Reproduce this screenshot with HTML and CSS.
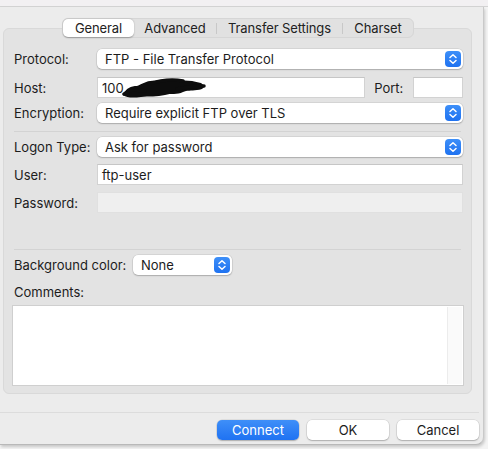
FILE: index.html
```html
<!DOCTYPE html>
<html>
<head>
<meta charset="utf-8">
<link rel="stylesheet" href="styles.css">
</head>
<body>
<div class="topstrip"></div>
<div class="screen">
  <div class="window">
    <div class="tabs">
      <div class="tab sel">General</div>
      <div class="tab">Advanced</div>
      <div class="tsep"></div>
      <div class="tab">Transfer Settings</div>
      <div class="tsep"></div>
      <div class="tab">Charset</div>
    </div>
    <div class="box">
      <div class="row r-protocol">
        <div class="label">Protocol:</div>
        <div class="popup wide"><span>FTP - File Transfer Protocol</span><span class="arrows"><svg width="16" height="16" viewBox="0 0 16 16"><path d="M5 6.5 L8 3.8 L11 6.5 M5 9.5 L8 12.2 L11 9.5" fill="none" stroke="#fff" stroke-width="1.5" stroke-linecap="round" stroke-linejoin="round"/></svg></span></div>
      </div>
      <div class="row tall r-host">
        <div class="label">Host:</div>
        <div class="field host"><span>100</span><svg class="scribble" width="86" height="20" viewBox="0 0 86 20"><path d="M2 17 C5 10 10 8 16 8 C22 6 26 2 34 3 C42 1 48 2 56 3 C62 2 70 2 80 5 C85 8 83 12 76 12 C70 13 66 12 62 14 C56 17 50 15 44 17 C36 19 28 18 20 19 C12 20 6 20 2 17 Z" fill="#0d0d0d"/><path d="M3 16 C10 10 16 12 24 13 M28 6 C40 2 52 1 62 3 M56 11 C66 9 74 8 83 8" fill="none" stroke="#0d0d0d" stroke-width="3.5" stroke-linecap="round"/></svg></div>
        <div class="label port">Port:</div>
        <div class="field portfield"></div>
      </div>
      <div class="row r-enc">
        <div class="label">Encryption:</div>
        <div class="popup wide"><span>Require explicit FTP over TLS</span><span class="arrows"><svg width="16" height="16" viewBox="0 0 16 16"><path d="M5 6.5 L8 3.8 L11 6.5 M5 9.5 L8 12.2 L11 9.5" fill="none" stroke="#fff" stroke-width="1.5" stroke-linecap="round" stroke-linejoin="round"/></svg></span></div>
      </div>
      <div class="sep s1"></div>
      <div class="row r-logon">
        <div class="label">Logon Type:</div>
        <div class="popup wide"><span>Ask for password</span><span class="arrows"><svg width="16" height="16" viewBox="0 0 16 16"><path d="M5 6.5 L8 3.8 L11 6.5 M5 9.5 L8 12.2 L11 9.5" fill="none" stroke="#fff" stroke-width="1.5" stroke-linecap="round" stroke-linejoin="round"/></svg></span></div>
      </div>
      <div class="row tall r-user">
        <div class="label">User:</div>
        <div class="field wide"><span>ftp-user</span></div>
      </div>
      <div class="row tall r-pass">
        <div class="label">Password:</div>
        <div class="field wide disabled"></div>
      </div>
      <div class="sep s2"></div>
      <div class="row r-bg">
        <div class="label bglabel">Background color:</div>
        <div class="popup small"><span>None</span><span class="arrows"><svg width="16" height="16" viewBox="0 0 16 16"><path d="M5 6.5 L8 3.8 L11 6.5 M5 9.5 L8 12.2 L11 9.5" fill="none" stroke="#fff" stroke-width="1.5" stroke-linecap="round" stroke-linejoin="round"/></svg></span></div>
      </div>
      <div class="label comments">Comments:</div>
      <div class="textarea"><div class="track"></div></div>
    </div>
    <div class="bottomsep"></div>
    <div class="buttons">
      <div class="btn primary">Connect</div>
      <div class="btn">OK</div>
      <div class="btn">Cancel</div>
    </div>
  </div>
  <div class="edge"></div>
</div>
</body>
</html>
```
FILE: styles.css
```css
* { box-sizing: border-box; }
html, body { margin: 0; padding: 0; }
body {
  width: 488px;
  height: 449px;
  overflow: hidden;
  background: #f4f4f4;
  font-family: Inter, "Liberation Sans", sans-serif;
  font-size: 13px;
  color: #1c1c1c;
}
.topstrip {
  height: 7px;
  background: #f2f0f2;
  border-bottom: 1px solid #d3d3d3;
}
.screen {
  display: flex;
  height: 441px;
}
.window {
  flex: none;
  width: 484px;
  height: 438px;
  background: #ececec;
  border-right: 1px solid #c9c9c9;
  border-bottom: 1px solid #b9b9b9;
  border-bottom-right-radius: 8px;
  box-shadow: 1px 2px 3px rgba(0,0,0,0.18);
  display: flex;
  flex-direction: column;
}
.window > * { flex: none; }
.edge { flex: 1; }
.tabs {
  align-self: flex-start;
  margin-left: 62px;
  margin-top: 11px;
  margin-bottom: -10px;
  position: relative;
  z-index: 2;
  width: 352px;
  height: 20px;
  background: #e1e1e1;
  border: 1px solid #d6d6d6;
  border-radius: 6px;
  display: flex;
  align-items: center;
}
.tab {
  height: 18px;
  line-height: 18px;
  text-align: center;
  color: #222;
  letter-spacing: -0.1px;
}
.tab:nth-child(1) { width: 71px; }
.tab:nth-child(2) { width: 82px; }
.tab:nth-child(4) { width: 125px; }
.tab:nth-child(6) { width: 70px; }
.tab.sel {
  background: #fff;
  border-radius: 5px;
  box-shadow: 0 0.5px 1.5px rgba(0,0,0,0.3);
}
.tsep { width: 1px; height: 11px; background: #c8c8c8; }
.box {
  margin-left: 3px;
  width: 469px;
  height: 366px;
  background: #e3e3e3;
  border: 1px solid #d9d9d9;
  border-radius: 6px;
  padding: 20px 8px 0 10px;
  display: flex;
  flex-direction: column;
}
.box > * { flex: none; }
.row {
  display: flex;
  align-items: center;
  height: 20px;
}
.row.tall { height: 21px; }
.label {
  width: 83px;
  flex: none;
}
.popup {
  height: 20px;
  background: #fff;
  border-radius: 5px;
  box-shadow: 0 0 0 0.5px rgba(0,0,0,0.12), 0 1px 1.5px rgba(0,0,0,0.2);
  display: flex;
  align-items: center;
  justify-content: space-between;
  padding: 0 2px 0 8px;
}
.popup.wide { width: 366px; }
.popup.small { width: 99px; }
.arrows {
  width: 16px;
  height: 16px;
  border-radius: 4px;
  background: linear-gradient(#3d8ff8, #1f72f0);
  display: flex;
}
.field {
  height: 21px;
  background: #fff;
  border: 1px solid #d2d2d2;
  border-top-color: #c6c6c6;
  display: flex;
  align-items: center;
  padding-left: 4px;
}
.field.wide { width: 366px; }
.field.host { width: 270px; }
.field.disabled { background: #efefef; border-color: #e0e0e0; }
.scribble { margin-left: -3px; }
.label.port { width: auto; margin-left: 9px; margin-right: 10px; }
.field.portfield { width: 50px; }
.r-host { margin-top: 8px; }
.r-enc { margin-top: 5px; }
.sep {
  height: 1px;
  background: #d3d3d3;
  width: 447px;
}
.s1 { margin-top: 8px; }
.r-logon { margin-top: 5px; }
.r-user { margin-top: 7px; }
.r-pass { margin-top: 7px; }
.s2 { margin-top: 36px; }
.r-bg { margin-top: 5px; }
.bglabel { width: 119px; }
.comments { margin-top: 9px; height: 16px; line-height: 16px; width: auto; }
.textarea {
  margin-top: 5px;
  margin-left: -2px;
  width: 452px;
  height: 81px;
  background: #fff;
  border: 1px solid #cfcfcf;
  display: flex;
  justify-content: flex-end;
  padding: 1px;
}
.track {
  width: 15px;
  background: #fafafa;
  border-left: 1px solid #ececec;
}
.bottomsep {
  margin-top: 18px;
  height: 1px;
  width: 479px;
  background: #dcdcdc;
}
.buttons {
  display: flex;
  justify-content: flex-end;
  gap: 8px;
  margin-top: 7px;
  padding-right: 4px;
}
.btn {
  width: 82px;
  height: 20px;
  line-height: 20px;
  text-align: center;
  background: #fff;
  border-radius: 5px;
  box-shadow: 0 0 0 0.5px rgba(0,0,0,0.12), 0 1px 1.5px rgba(0,0,0,0.22);
}
.btn.primary {
  background: linear-gradient(#3f8ff8, #1f72f2);
  color: #fff;
}
```
